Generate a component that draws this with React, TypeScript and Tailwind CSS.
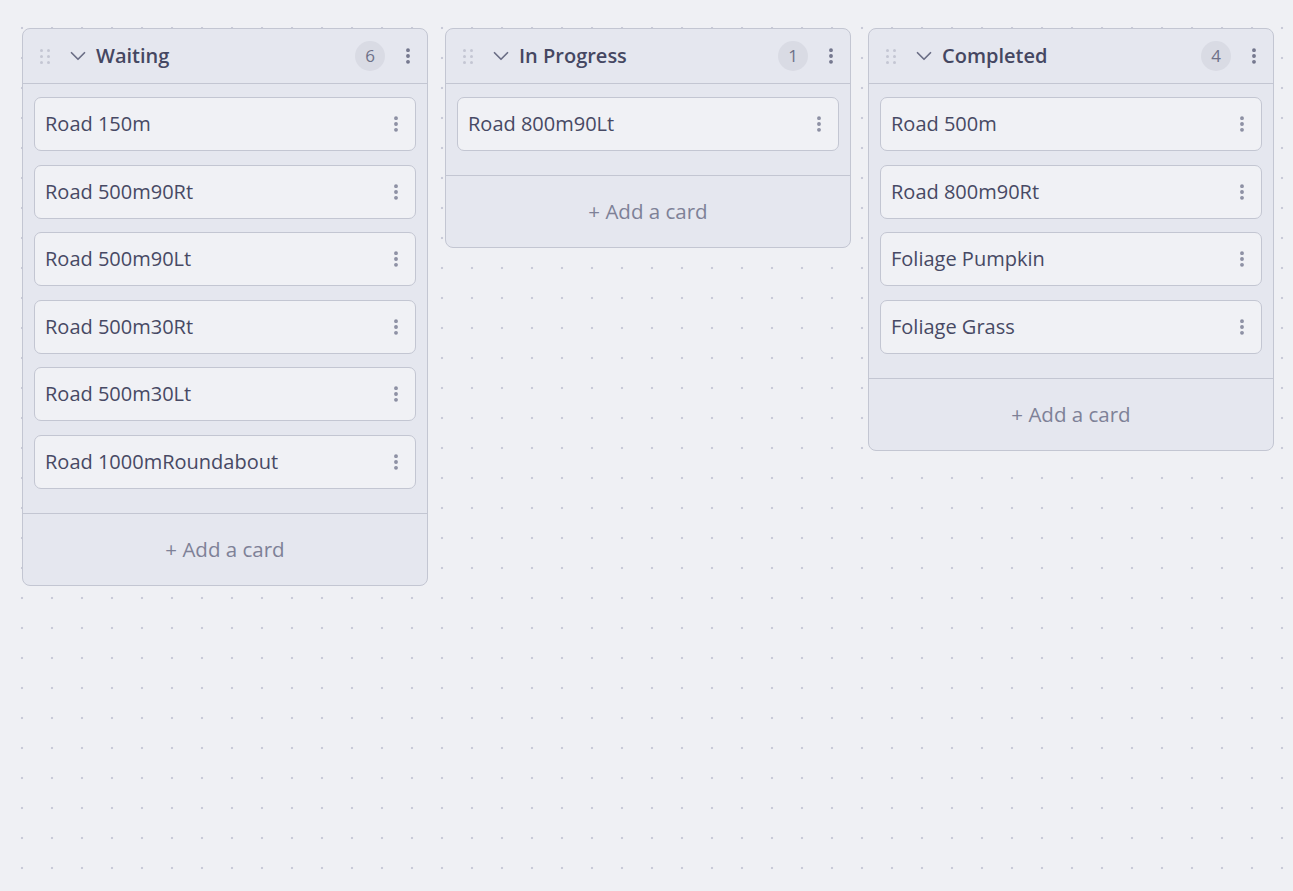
import React from 'react';
import { ChevronDown, EllipsisVertical } from 'lucide-react';

type Column = { title: string; cards: string[] };

const columns: Column[] = [
  {
    title: 'Waiting',
    cards: ['Road 150m', 'Road 500m90Rt', 'Road 500m90Lt', 'Road 500m30Rt', 'Road 500m30Lt', 'Road 1000mRoundabout'],
  },
  { title: 'In Progress', cards: ['Road 800m90Lt'] },
  { title: 'Completed', cards: ['Road 500m', 'Road 800m90Rt', 'Foliage Pumpkin', 'Foliage Grass'] },
];

function DragHandle() {
  return (
    <div className="grid grid-cols-2 gap-x-[4px] gap-y-[3px] w-[10px]">
      {Array.from({ length: 6 }).map((_, i) => (
        <span key={i} className="w-[3px] h-[3px] rounded-full bg-[#c4c6d3]" />
      ))}
    </div>
  );
}

function Card({ label }: { label: string }) {
  return (
    <div className="h-[54px] flex items-center justify-between pl-[10px] pr-[9px] bg-[#f0f1f5] border border-[#c3c6d2] rounded-[7px]">
      <span className="text-[20px] text-[#474964]">{label}</span>
      <EllipsisVertical size={20} strokeWidth={2.6} className="text-[#8a8da1]" />
    </div>
  );
}

function BoardColumn({ col }: { col: Column }) {
  return (
    <div className="w-[406px] self-start bg-[#e5e7ef] border border-[#c3c6d2] rounded-[8px] flex flex-col">
      {/* Header */}
      <div className="h-[55px] flex items-center pl-[17px] pr-[9px] border-b border-[#c3c6d2]">
        <DragHandle />
        <ChevronDown size={26} strokeWidth={1.6} className="ml-[15px] text-[#6b6e86]" />
        <h2 className="ml-[5px] text-[20px] font-semibold text-[#454762]">{col.title}</h2>
        <span className="ml-auto w-[30px] h-[30px] rounded-full bg-[#d9dbe4] flex items-center justify-center text-[17px] text-[#6e7188]">
          {col.cards.length}
        </span>
        <EllipsisVertical size={20} strokeWidth={2.6} className="ml-[13px] text-[#71748b]" />
      </div>

      {/* Cards */}
      <div className="flex flex-col gap-[13.5px] pt-[13px] pb-[24px] px-[11px]">
        {col.cards.map((c) => (
          <Card key={c} label={c} />
        ))}
      </div>

      {/* Footer */}
      <div className="h-[72px] border-t border-[#c3c6d2] flex items-center justify-center">
        <span className="text-[20.5px] text-[#7e8197]">+ Add a card</span>
      </div>
    </div>
  );
}

export default function App() {
  return (
    <div
      className="min-h-screen w-full bg-[#eff0f4] [background-image:radial-gradient(circle,#c8cad8_1px,transparent_1.6px)] [background-size:30px_30px] [background-position:7px_13px] pt-[28px] pl-[22px] flex gap-[17px] items-start"
      style={{ fontFamily: '"Open Sans", "Noto Sans", sans-serif' }}
    >
      {columns.map((col) => (
        <BoardColumn key={col.title} col={col} />
      ))}
    </div>
  );
}
